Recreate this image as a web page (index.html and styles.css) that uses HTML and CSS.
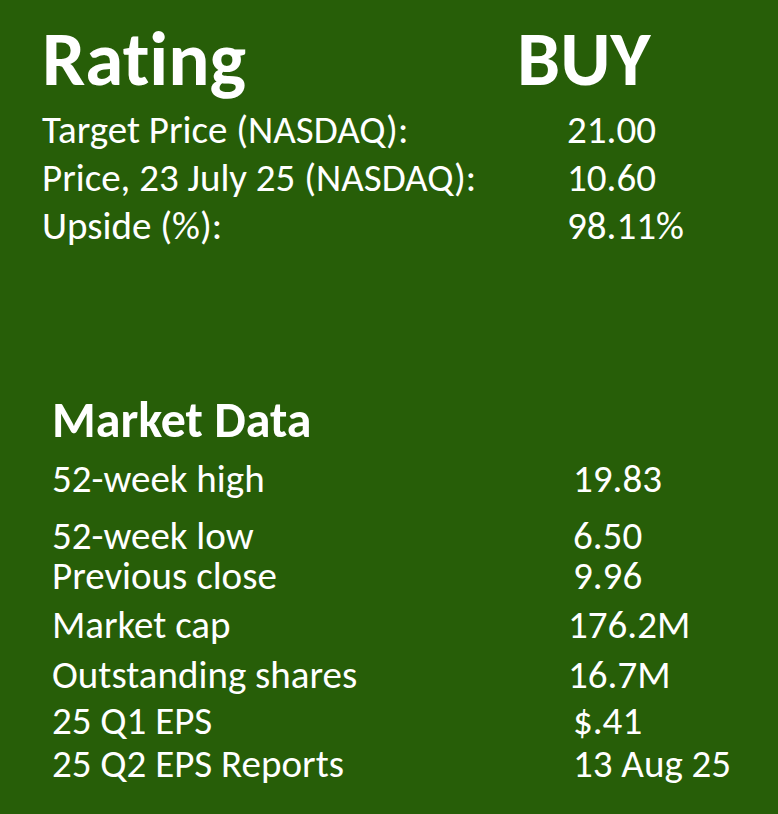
FILE: index.html
```html
<!DOCTYPE html>
<html lang="en">
<head>
<meta charset="utf-8">
<title>Rating</title>
<link rel="stylesheet" href="styles.css">
</head>
<body>
<main class="panel">
  <section class="rating">
    <div class="rating-head">
      <h1 class="rating-title">Rating</h1>
      <div class="rating-value">BUY</div>
    </div>
    <div class="row top-row"><span>Target Price (NASDAQ):</span><span>21.00</span></div>
    <div class="row top-row"><span>Price, 23 July 25 (NASDAQ):</span><span>10.60</span></div>
    <div class="row top-row"><span>Upside (%):</span><span>98.11%</span></div>
  </section>
  <section class="market">
    <h2 class="market-title">Market Data</h2>
    <div class="row mrow r1"><span>52-week high</span><span>19.83</span></div>
    <div class="row mrow r2"><span>52-week low</span><span>6.50</span></div>
    <div class="row mrow r3"><span>Previous close</span><span>9.96</span></div>
    <div class="row mrow r4"><span>Market cap</span><span class="shift">176.2M</span></div>
    <div class="row mrow r5"><span>Outstanding shares</span><span class="shift">16.7M</span></div>
    <div class="row mrow r6"><span>25 Q1 EPS</span><span>$.41</span></div>
    <div class="row mrow r7"><span>25 Q2 EPS Reports</span><span>13 Aug 25</span></div>
  </section>
</main>
</body>
</html>
```

FILE: styles.css
```css
html, body {
  margin: 0;
  padding: 0;
  background: #275e08;
}
body {
  font-family: Carlito, "Open Sans", sans-serif;
  font-variant-ligatures: none;
  color: #ffffff;
  width: 778px;
  height: 814px;
  overflow: hidden;
}
.panel {
  padding: 21px 0 0 0;
}
.rating {
  padding-left: 42px;
}
.rating-head {
  display: grid;
  grid-template-columns: 475px auto;
  height: 85px;
  align-items: start;
}
.rating-title, .rating-value {
  margin: 0;
  font-size: 77px;
  font-weight: 700;
  line-height: 76px;
}
.row {
  display: grid;
}
.top-row {
  grid-template-columns: 525px auto;
  font-size: 39px;
  line-height: 48px;
}
.market {
  padding-left: 52px;
  margin-top: 145px;
}
.market-title {
  margin: 0;
  font-size: 50px;
  font-weight: 700;
  line-height: 50px;
}
.mrow {
  grid-template-columns: 521px auto;
  font-size: 39px;
  line-height: 42px;
}
.r1 { margin-top: 13px; }
.r2 { margin-top: 17px; line-height: 38px; }
.r3 { margin-top: 0; }
.r4 { margin-top: 7px; }
.r5 { margin-top: 8px; }
.r6 { margin-top: 4px; }
.r7 { margin-top: 1px; }
.shift { margin-left: -5px; }
```
